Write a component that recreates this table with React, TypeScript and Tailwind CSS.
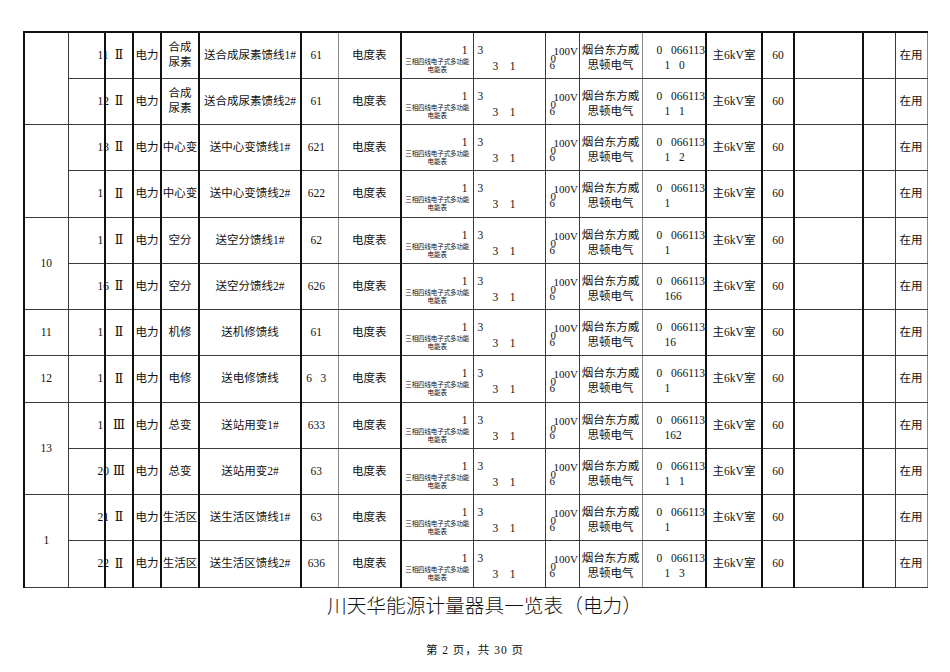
import React from 'react';

type Row = {
  no: string;
  grade: string;
  place: string;
  line: string;
  code: string;
  serial: string;
};

const rows: Row[] = [
  { no: '11', grade: 'Ⅱ', place: '合成\n尿素', line: '送合成尿素馈线1#', code: '61', serial: '1   0' },
  { no: '12', grade: 'Ⅱ', place: '合成\n尿素', line: '送合成尿素馈线2#', code: '61', serial: '1   1' },
  { no: '13', grade: 'Ⅱ', place: '中心变', line: '送中心变馈线1#', code: '621', serial: '1   2' },
  { no: '1', grade: 'Ⅱ', place: '中心变', line: '送中心变馈线2#', code: '622', serial: '1' },
  { no: '1', grade: 'Ⅱ', place: '空分', line: '送空分馈线1#', code: '62', serial: '1' },
  { no: '16', grade: 'Ⅱ', place: '空分', line: '送空分馈线2#', code: '626', serial: '166' },
  { no: '1', grade: 'Ⅱ', place: '机修', line: '送机修馈线', code: '61', serial: '16' },
  { no: '1', grade: 'Ⅱ', place: '电修', line: '送电修馈线', code: '6   3', serial: '1' },
  { no: '1', grade: 'Ⅲ', place: '总变', line: '送站用变1#', code: '633', serial: '162' },
  { no: '20', grade: 'Ⅲ', place: '总变', line: '送站用变2#', code: '63', serial: '1   1' },
  { no: '21', grade: 'Ⅱ', place: '生活区', line: '送生活区馈线1#', code: '63', serial: '1' },
  { no: '22', grade: 'Ⅱ', place: '生活区', line: '送生活区馈线2#', code: '636', serial: '1   3' },
];

// group cell (first column): label + how many rows it spans, keyed by starting row
const groups: Record<number, { label: string; span: number }> = {
  0: { label: '', span: 2 },
  2: { label: '', span: 2 },
  4: { label: '10', span: 2 },
  6: { label: '11', span: 1 },
  7: { label: '12', span: 1 },
  8: { label: '13', span: 2 },
  10: { label: '1', span: 2 },
};

const widths = [
  'w-[44px]', 'w-[37px]', 'w-[28px]', 'w-[28px]', 'w-[38px]', 'w-[102px]', 'w-[37px]', 'w-[63px]', 'w-[72px]',
  'w-[72px]', 'w-[34px]', 'w-[63px]', 'w-[64px]', 'w-[56px]', 'w-[32px]', 'w-[69px]', 'w-[32px]', 'w-[32px]',
];

const thin = 'border border-[#3a3a3a] p-0';
const thick = 'border border-[#3a3a3a] border-r-2 border-r-[#111] p-0';
const grayR = 'border border-[#3a3a3a] border-r-[#8a8a8a] p-0';

export default function App() {
  return (
    <div
      className="w-[950px] h-[672px] bg-white text-[#111] overflow-hidden"
      style={{ fontFamily: '"Liberation Serif", "Noto Sans CJK SC", serif' }}
    >
      <table className="table-fixed border-collapse ml-[23px] mt-[31px] w-[903px] text-[11.5px] border-l-2 border-l-[#111] border-t-2 border-t-[#111]">
        <colgroup>
          {widths.map((w, i) => (
            <col key={i} className={w} />
          ))}
        </colgroup>
        <tbody>
          {rows.map((r, i) => (
            <tr key={i} className="h-[46.25px]">
              {groups[i] && (
                <td rowSpan={groups[i].span} className={`${thin} text-center align-middle border-l-2 border-l-[#111]`}>
                  {groups[i].label}
                </td>
              )}
              {/* row number spills over the next line, as in the print */}
              <td className={`${thick} align-middle whitespace-nowrap`}>
                <div className="pl-[29px] leading-[15px]">{r.no}</div>
              </td>
              <td
                className={`${thick} text-center align-middle`}
                style={{ fontFamily: '"DejaVu Serif", "Liberation Serif", "Noto Sans CJK SC", serif' }}
              >
                <span className="text-[12.5px]">{r.grade}</span>
              </td>
              <td className={`${thick} text-center align-middle`}>电力</td>
              <td className={`${thick} text-center align-middle whitespace-pre-line leading-[15px]`}>{r.place}</td>
              <td className={`${thick} text-center align-middle whitespace-nowrap`}>{r.line}</td>
              <td className={`${grayR} text-center align-middle whitespace-pre`}>
                <div className="pr-[7px]">{r.code}</div>
              </td>
              <td className={`${thick} text-center align-middle`}>电度表</td>
              <td className={`${thin} align-top`}>
                <div className="pt-[10px] leading-[15px] text-right pr-[5px]">1</div>
                <div className="text-center text-[6.5px] leading-[8px] whitespace-nowrap tracking-[-0.1px]">三相四线电子式多功能</div>
                <div className="text-center text-[6.5px] leading-[8px]">电能表</div>
              </td>
              <td className={`${thin} align-top whitespace-pre`}>
                <div className="pt-[10px] leading-[15px] pl-[4px]">3</div>
                <div className="mt-[1px] leading-[15px] pl-[19px]">3    1</div>
              </td>
              <td className={`${thin} align-top whitespace-nowrap`}>
                <div className="pt-[13px] leading-[10px] pl-[8px] text-[11px]">100V</div>
                <div className="leading-[5px] pl-[5px] text-[11px]">0</div>
                <div className="leading-[8px] pl-[4px] text-[11px]">6</div>
              </td>
              <td className={`${grayR} align-top text-center leading-[15px]`}>
                <div className="pt-[10px]">烟台东方威</div>
                <div>思顿电气</div>
              </td>
              <td className={`${thick} align-top whitespace-pre`}>
                <div className="pt-[10px] leading-[15px] pl-[14px]">0   066113</div>
                <div className="leading-[15px] pl-[22px]">{r.serial}</div>
              </td>
              <td className={`${thick} text-center align-middle whitespace-nowrap`}>主6kV室</td>
              <td className={`${thick} text-center align-middle`}>60</td>
              <td className={thick}></td>
              <td className={thin}></td>
              <td className={`${grayR} text-center align-middle`}>在用</td>
            </tr>
          ))}
        </tbody>
      </table>

      <div
        className="mt-[5px] pl-[19px] text-center text-[19.7px] leading-[24px] font-light"
        style={{ fontFamily: '"Noto Sans CJK SC", "Liberation Serif", sans-serif' }}
      >
        川天华能源计量器具一览表（电力）
      </div>

      <div className="mt-[25px] text-center text-[11.5px] leading-[16px] tracking-[1px] whitespace-pre">
        第 2 页，共 30 页
      </div>
    </div>
  );
}
